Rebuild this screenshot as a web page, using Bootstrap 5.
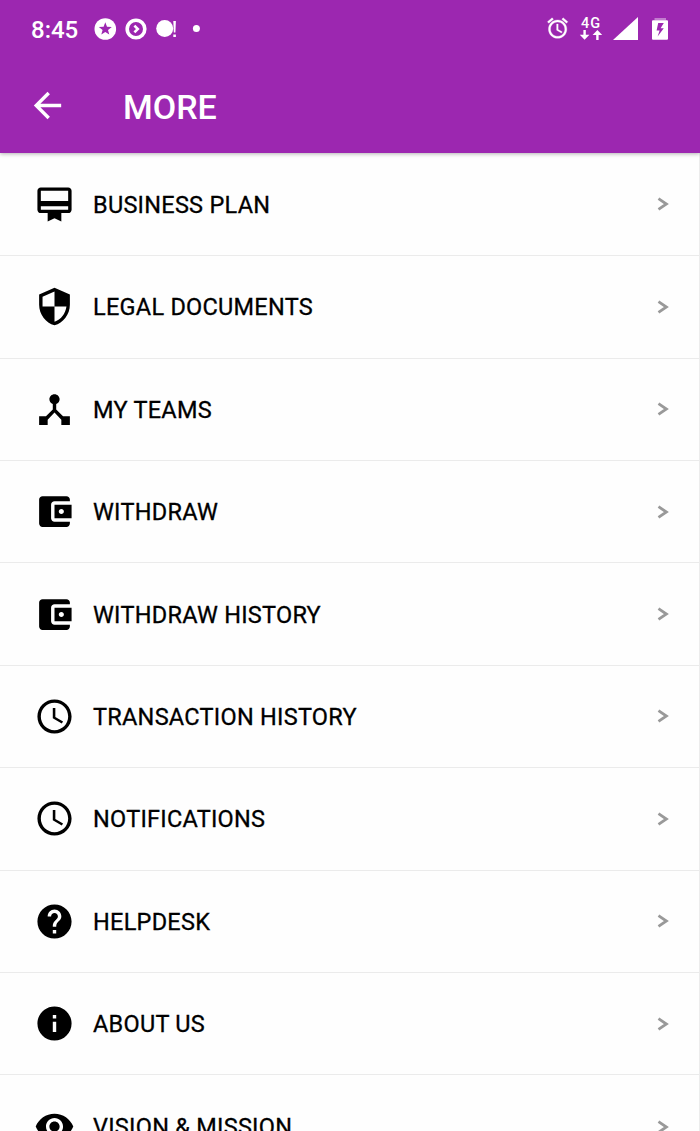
<!DOCTYPE html>
<html lang="en">
<head>
<meta charset="utf-8">
<meta name="viewport" content="width=device-width, initial-scale=1">
<title>More</title>
<link href="https://cdn.jsdelivr.net/npm/bootstrap@5.3.0/dist/css/bootstrap.min.css" rel="stylesheet">
<style>
  html, body { height: 1131px; overflow: hidden; }
  body { font-family: Roboto, "Liberation Sans", sans-serif; color: #000; background: #fefefe; }
  svg { display: block; flex: none; }
  .app-top { background: #9c27b0; color: #fff; height: 153px; box-shadow: 0 1px 4px rgba(0,0,0,.3); z-index: 2; }
  .status-bar { height: 58px; padding-left: 31px; }
  .clock { font-size: 24px; font-weight: 500; line-height: 28px; width: 63px; padding-top: 2px; }
  .title-bar { height: 95px; padding: 0 0 0 27px; }
  .screen-title { font-size: 34px; font-weight: 500; line-height: 40px; margin: 2px 0 0 55px; }
  .menu { border-right: 1px solid #ececec; padding-top: .8px; }
  .menu-row { height: 102.4px; padding: 0 30px 0 34px; border: 0; border-bottom: 1px solid #ebebeb; border-radius: 0; background: transparent; color: #000; }
  .menu-label { font-size: 23.5px; letter-spacing: .26px; line-height: 28px; margin-left: 18px; padding-top: 1px; -webkit-text-stroke: .3px #000; }
  .chev { fill: none; stroke: #999; stroke-width: 2.8; }
</style>
</head>
<body class="position-relative">
<svg width="0" height="0" class="position-absolute" aria-hidden="true">
  <symbol id="plan" viewBox="0 0 24 24"><path d="M20 2H4c-1.11 0-2 .89-2 2v11c0 1.11.89 2 2 2h4v5l4-2 4 2v-5h4c1.11 0 2-.89 2-2V4c0-1.11-.89-2-2-2zm0 13H4v-2h16v2zm0-5H4V4h16v6z"/></symbol>
  <symbol id="shield" viewBox="0 0 24 24"><path d="M12 1L3 5v6c0 5.55 3.84 10.74 9 12 5.16-1.26 9-6.45 9-12V5l-9-4zm0 10.99h7c-.53 4.12-3.28 7.79-7 8.94V12H5V6.3l7-3.11v8.8z"/></symbol>
  <symbol id="hub" viewBox="0 0 24 24"><path d="M17 16l-4-4V8.82C14.16 8.4 15 7.3 15 6c0-1.66-1.34-3-3-3S9 4.34 9 6c0 1.3.84 2.4 2 2.82V12l-4 4H3v5h5v-3.05l4-4.2 4 4.2V21h5v-5h-4z"/></symbol>
  <symbol id="wallet" viewBox="0 0 24 24"><path d="M21 18v1c0 1.1-.9 2-2 2H5c-1.11 0-2-.9-2-2V5c0-1.1.89-2 2-2h14c1.1 0 2 .9 2 2v1h-9c-1.11 0-2 .9-2 2v8c0 1.1.89 2 2 2h9zm-9-2h10V8H12v8zm4-2.5c-.83 0-1.5-.67-1.5-1.5s.67-1.5 1.5-1.5 1.5.67 1.5 1.5-.67 1.5-1.5 1.5z"/></symbol>
  <symbol id="time" viewBox="0 0 24 24"><path d="M11.99 2C6.47 2 2 6.48 2 12s4.47 10 9.99 10C17.52 22 22 17.52 22 12S17.52 2 11.99 2zM12 20c-4.42 0-8-3.58-8-8s3.58-8 8-8 8 3.58 8 8-3.58 8-8 8zm.5-13H11v6l5.25 3.15.75-1.23-4.5-2.67z"/></symbol>
  <symbol id="help" viewBox="0 0 24 24"><path d="M12 2C6.48 2 2 6.48 2 12s4.48 10 10 10 10-4.48 10-10S17.52 2 12 2zm1 17h-2v-2h2v2zm2.07-7.75l-.9.92C13.45 12.9 13 13.5 13 15h-2v-.5c0-1.1.45-2.1 1.17-2.83l1.24-1.26c.37-.36.59-.86.59-1.41 0-1.1-.9-2-2-2s-2 .9-2 2H8c0-2.21 1.79-4 4-4s4 1.79 4 4c0 .88-.36 1.68-.93 2.25z"/></symbol>
  <symbol id="info" viewBox="0 0 24 24"><path d="M12 2C6.48 2 2 6.48 2 12s4.48 10 10 10 10-4.48 10-10S17.52 2 12 2zm1 15h-2v-6h2v6zm0-8h-2V7h2v2z"/></symbol>
  <symbol id="eye" viewBox="0 0 24 24"><path d="M12 4.5C7 4.5 2.73 7.61 1 12c1.73 4.39 6 7.5 11 7.5s9.27-3.11 11-7.5c-1.73-4.39-6-7.5-11-7.5zM12 17c-2.76 0-5-2.24-5-5s2.24-5 5-5 5 2.24 5 5-2.24 5-5 5zm0-8c-1.66 0-3 1.34-3 3s1.34 3 3 3 3-1.34 3-3-1.34-3-3-3z"/></symbol>
  <symbol id="chevron" viewBox="0 0 12 16"><path class="chev" d="M1.500 2.600L9.400 8l-7.900 5.400"/></symbol>
</svg>

<header class="app-top position-relative">
  <div class="status-bar d-flex align-items-center">
    <span class="clock">8:45</span>
    <svg width="110" height="24" viewBox="94 17 110 24" fill="#fff">
      <circle cx="105.3" cy="29" r="10.8"/>
      <path fill="#9c27b0" d="M105.3 22.2l1.7 4.500 4.800.2-3.800 3 1.300 4.600-4-2.600-4 2.600 1.300-4.600-3.800-3 4.800-.2z"/>
      <circle cx="136" cy="29" r="8.800" fill="none" stroke="#fff" stroke-width="3.600"/>
      <path d="M134.400 25.600l3.400 3.400-3.400 3.400" fill="none" stroke="#fff" stroke-width="2.600"/>
      <circle cx="164.700" cy="28.600" r="8.500"/>
      <path d="M173.300 21h2.600l-.5 11.600h-1.600zM173.300 34.600h2.600v2.400h-2.600z"/>
      <circle cx="196.400" cy="28.600" r="3.500"/>
    </svg>
    <svg class="ms-auto" width="154" height="30" viewBox="546 14 154 30" fill="#fff">
      <g transform="translate(545.4 15.900) scale(1.02)"><path stroke="#fff" stroke-width=".3" d="M22 5.720l-4.600-3.860-1.290 1.530 4.600 3.860L22 5.720zM7.880 3.390L6.600 1.860 2 5.710l1.290 1.530 4.590-3.850zM12.500 8H11v6l4.750 2.850.75-1.230-4-2.370V8zM12 4c-4.970 0-9 4.030-9 9s4.020 9 9 9c4.970 0 9-4.030 9-9s-4.030-9-9-9zm0 16c-3.870 0-7-3.130-7-7s3.130-7 7-7 7 3.130 7 7-3.130 7-7 7z"/></g>
      <text x="581" y="28" font-size="14.5" font-weight="500" letter-spacing="1">4G</text>
      <path d="M583.400 30h2.400v4.800h3.600l-4.800 5-4.800-5h3.600zM596.200 40h2.400v-5h3.600l-4.800-5-4.800 5h3.600z"/>
      <path d="M613 40l25-23v23z"/>
      <path d="M654.500 18h11.500v2.200h-11.500z" opacity=".4"/>
      <path fill-rule="evenodd" d="M653 20.200h14q1 0 1 1v17.600q0 1-1 1h-14q-1 0-1-1V21.200q0-1 1-1zM658.200 23l-1.600 7.400h3l-2 6 6.200-8.200h-3.200l3.200-5.200z"/>
    </svg>
  </div>
  <div class="title-bar d-flex align-items-center">
    <svg width="41" height="41" viewBox="0 0 24 24" fill="#fff"><path d="M20 11H7.830l5.590-5.590L12 4l-8 8 8 8 1.410-1.410L7.830 13H20v-2z"/></svg>
    <h1 class="screen-title">MORE</h1>
  </div>
</header>

<main class="menu list-group list-group-flush rounded-0" id="menu"></main>

<script src="https://cdn.jsdelivr.net/npm/bootstrap@5.3.0/dist/js/bootstrap.bundle.min.js"></script>
<script>
  const items = [
    ['plan', 'BUSINESS PLAN'], ['shield', 'LEGAL DOCUMENTS'], ['hub', 'MY TEAMS'],
    ['wallet', 'WITHDRAW'], ['wallet', 'WITHDRAW HISTORY'], ['time', 'TRANSACTION HISTORY'],
    ['time', 'NOTIFICATIONS'], ['help', 'HELPDESK'], ['info', 'ABOUT US'], ['eye', 'VISION &amp; MISSION']
  ];
  document.getElementById('menu').innerHTML = items.map(([icon, label]) => `
    <a class="menu-row list-group-item d-flex align-items-center text-decoration-none">
      <svg width="41" height="41"><use href="#${icon}"/></svg>
      <span class="menu-label">${label}</span>
      <svg class="ms-auto" width="12" height="16"><use href="#chevron"/></svg>
    </a>`).join('');
</script>
</body>
</html>
